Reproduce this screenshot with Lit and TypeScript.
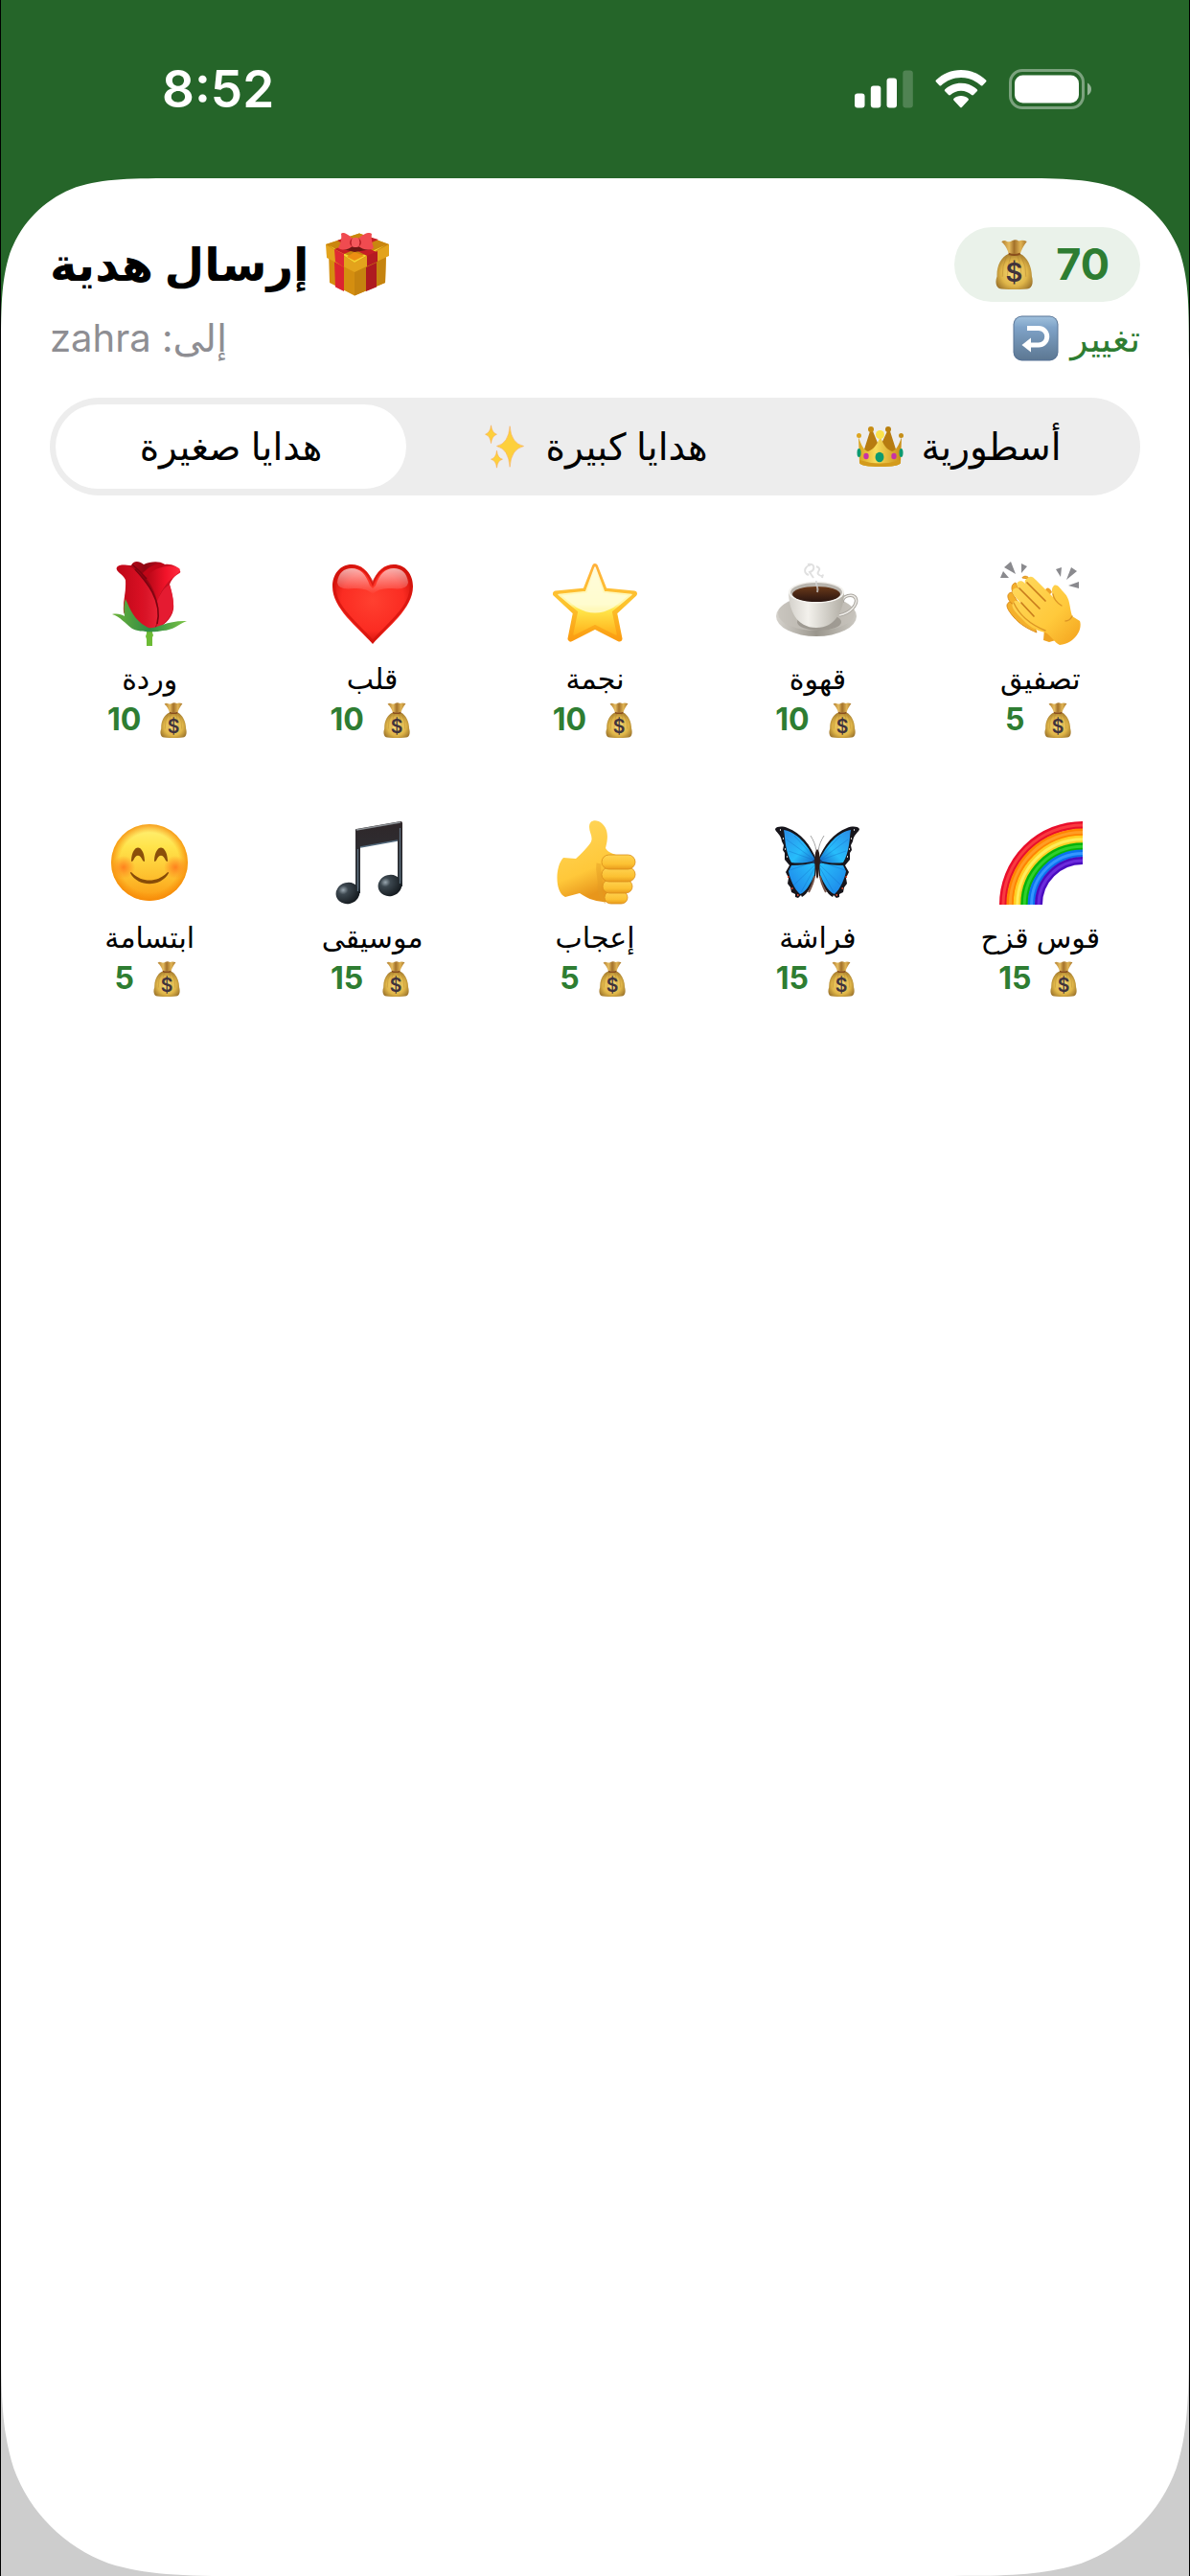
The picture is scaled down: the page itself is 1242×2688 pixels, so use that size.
import { LitElement, html, svg, css, TemplateResult } from "lit";
import { customElement, property, state } from "lit/decorators.js";

/* Every drawing below sits on its own small grid; gift art uses an 88 x 88 box. */
const art: Record<string, TemplateResult> = {
  rose: html`<svg viewBox="0 0 88 88" aria-hidden="true">
    <defs>
      <linearGradient id="r1" x1="0" x2="1"><stop offset="0" stop-color="#d80a1c" /><stop offset=".45" stop-color="#8e0512" /><stop offset="1" stop-color="#e8172a" /></linearGradient>
      <linearGradient id="r2" x1="0" x2="1"><stop offset="0" stop-color="#b30615" /><stop offset=".6" stop-color="#f2142a" /><stop offset="1" stop-color="#ff2c40" /></linearGradient>
      <linearGradient id="r3" x1="0" x2="1"><stop offset="0" stop-color="#6db33a" /><stop offset=".5" stop-color="#2f8a45" /><stop offset="1" stop-color="#7cc544" /></linearGradient>
    </defs>
    <path d="M41 68h6l0 6 1 3-1 2v9h-6v-7l-1-3 1-3z" fill="#6cbb35" />
    <path d="M25 4C27-1 33-1 38 3C45 0 54-1 60 3C67 2 74 5 76 10C78 13 70 12 65 24C67 32 70 42 69 50C67 60 59 68 45 72C32 70 20 63 17 52C16 42 20 32 19 19C16 12 8 10 10 6C13 2 20 4 25 4Z" fill="url(#r1)" />
    <path d="M36 13C42 6 52 0 60 3C56 8 44 12 41 18Z" fill="#c00617" />
    <path d="M40 17C48 6 66 2 75 7C79 11 67 15 60 26C55 33 54 37 52 42C50 32 46 24 40 17Z" fill="url(#r2)" />
    <path d="M65 24C68 33 71 45 67 54C63 62 57 67 50 71C55 60 54 52 52 41C57 30 60 27 65 24Z" fill="#e51b31" />
    <path d="M10 6C14 2 24 4 29 9C34 14 46 28 50 38C55 50 54 62 49 70C36 70 19 62 17 52C17 40 21 31 19 19C17 13 8 11 10 6Z" fill="url(#r2)" opacity=".72" />
    <path d="M29 8C40 20 58 40 52 65" fill="none" stroke="#7c0410" stroke-width="1.6" />
    <path d="M26 3C32 8 36 12 41 18" fill="none" stroke="#7c0410" stroke-width="1.4" />
    <path d="M5 55C10 54 15 55 18 57C17 50 17 45 19 39C24 50 28 61 41 68C48 73 59 61 83 62C75 65 68 72 58 72C51 74 33 74 26 70C19 65 13 57 5 55Z" fill="url(#r3)" />
  </svg>`,
  heart: html`<svg viewBox="0 0 88 88" aria-hidden="true">
    <defs>
      <radialGradient id="h1" cx=".5" cy=".45" r=".55"><stop offset="0" stop-color="#ff4030" /><stop offset=".7" stop-color="#fb2c22" /><stop offset="1" stop-color="#d3130c" /></radialGradient>
      <linearGradient id="h2" x1="0" y1="0" x2="0" y2="1"><stop offset="0" stop-color="#fff" stop-opacity=".65" /><stop offset="1" stop-color="#fff" stop-opacity="0" /></linearGradient>
    </defs>
    <path d="M44 22C39 9 32 3 22 3C10 3 2 13 2 26C2 49 28 68 44 86C60 68 86 49 86 26C86 13 78 3 66 3C56 3 49 9 44 22Z" fill="url(#h1)" />
    <path d="M44 23C39 11 32 5 22 5C11 5 4 14 4 26C4 48 28 65 44 83C60 65 84 48 84 26C84 14 77 5 66 5C56 5 49 11 44 23Z" fill="none" stroke="#d3130c" stroke-width="2.5" opacity=".75" />
    <path d="M7 22C8 12 14 7 22 7C31 7 37 13 41 25L44 28L47 25C51 13 57 7 66 7C74 7 80 12 81 22Q80 30 64 28Q50 27 44 34Q38 27 24 28Q8 30 7 22Z" fill="url(#h2)" />
  </svg>`,
  star: html`<svg viewBox="0 0 88 88" aria-hidden="true">
    <defs>
      <linearGradient id="s1" x1="0" y1="0" x2="0" y2="1"><stop offset="0" stop-color="#ffb13a" /><stop offset=".5" stop-color="#fdc52e" /><stop offset="1" stop-color="#fb9d12" /></linearGradient>
      <linearGradient id="s2" x1="0" y1="0" x2="0" y2="1"><stop offset="0" stop-color="#fffbe0" /><stop offset=".55" stop-color="#fff7a8" /><stop offset=".62" stop-color="#ffe84c" /><stop offset="1" stop-color="#ffb31b" /></linearGradient>
    </defs>
    <path d="M44 5L54 30.500L85 33.500L64 53L69.500 80.500L44 67.500L18.500 80.500L24 53L3 33.500L34 30.500Z" fill="url(#s1)" stroke="url(#s1)" stroke-width="6" stroke-linejoin="round" />
    <path d="M44 6L53.500 31.500L82 34.500L61 52L66 76L44 65L22 76L27 52L6 34.500L34.500 31.500Z" fill="url(#s2)" stroke="url(#s2)" stroke-width="1.500" stroke-linejoin="round" />
    <path d="M44 8L52.500 32.500L79 35.500L63 48Q44 59 25 48L9 35.500L35.500 32.500Z" fill="#fffdd8" opacity=".8" />
  </svg>`,
  coffee: html`<svg viewBox="0 0 88 88" aria-hidden="true">
    <defs>
      <linearGradient id="c1" x1="0" x2="1"><stop offset="0" stop-color="#d6d3cd" /><stop offset=".5" stop-color="#9a968d" /><stop offset="1" stop-color="#ccc9c2" /></linearGradient>
      <linearGradient id="c2" x1="0" x2="1"><stop offset="0" stop-color="#d4d1cb" /><stop offset=".35" stop-color="#f3f1ec" /><stop offset="1" stop-color="#b1ada4" /></linearGradient>
      <linearGradient id="c3" x1="0" y1="0" x2="0" y2="1"><stop offset="0" stop-color="#6b3a1a" /><stop offset="1" stop-color="#2a1510" /></linearGradient>
    </defs>
    <ellipse cx="43" cy="57" rx="42" ry="21" fill="url(#c1)" />
    <ellipse cx="43" cy="54" rx="40" ry="18" fill="#c4c0b9" opacity=".7" />
    <ellipse cx="46" cy="63" rx="23" ry="9" fill="#8b867d" opacity=".6" />
    <path d="M70 43C70 35 81 33 84 38C87 45 78 54 67 56" fill="none" stroke="#a9a59e" stroke-width="3.500" />
    <path d="M70 43C70 35 81 33 84 38C87 45 78 54 67 56" fill="none" stroke="#efede9" stroke-width="1.500" />
    <path d="M14 31C14 50 22 69 43 69C63 69 72 51 72 31Z" fill="url(#c2)" />
    <ellipse cx="43" cy="32" rx="29" ry="11.500" fill="#f4f2ee" />
    <ellipse cx="43" cy="32" rx="27" ry="10" fill="#b9b5ae" />
    <ellipse cx="43" cy="34" rx="25" ry="8" fill="url(#c3)" />
    <path d="M35 14C27 11 33 3 37 4M34 3C42 1 42 9 36 11L40 17M43 5C51 8 41 11 46 14S50 11 49 17M43 20C42 25 46 27 44 32" fill="none" stroke="#d5d5d5" stroke-width="2" opacity=".75" />
  </svg>`,
  clap: html`<svg viewBox="0 0 88 88" aria-hidden="true">
    <defs>
      <linearGradient id="k1" x1="0" y1="0" x2="1" y2="1"><stop offset="0" stop-color="#ffd95e" /><stop offset=".6" stop-color="#ffc93b" /><stop offset="1" stop-color="#f3a11d" /></linearGradient>
    </defs>
    <path d="M2 17L5 10L11 17ZM6 6L13 0L18 13ZM24 2L30 5L24 12ZM60 8L66 6L65 16ZM76 6L82 10L71 19ZM73 25L84 21L84 28Z" fill="#8a8a8e" />
    <path d="M48 70L47 82L53 84L60 82Z" fill="#efa321" />
    <path d="M12 42C5 45 12 53 16 58C22 65 30 70 40 74L34 58ZM18 22C12 24 14 31 16 34L26 40ZM14 32C8 33 9 39 14 44L24 48ZM25 17C25 15 31 14 32 18Z" fill="#f4b02c" stroke="#dd9020" stroke-width="1" />
    <path d="M49 30C50 26 54 27 56 32L52 36Z" fill="#eda127" />
    <path d="M31 17C34 14 37 17 39 19L57 37C56 31 55 28 58 25C62 23 65 29 69 33C75 39 74 47 77 57L85 62C88 70 81 85 64 87C58 84 55 77 49 74C38 72 30 66 24 59C16 51 12 46 16 42C19 39 22 42 24 44L16 35C12 30 18 25 22 29L20 26C17 21 24 18 27 22L28 23C27 20 28 18 31 17Z" fill="url(#k1)" />
    <path d="M30 22L49 41M22 28L43 49M24 43L37 57" fill="none" stroke="#c97c1c" stroke-width="1.700" stroke-linecap="round" />
    <path d="M57 34C58 40 61 43 66 46M77 57C75 61 72 62 70 62M16 43C21 54 32 65 49 72" fill="none" stroke="#dd9625" stroke-width="1.400" stroke-linecap="round" />
  </svg>`,
  smile: html`<svg viewBox="0 0 88 88" aria-hidden="true">
    <defs>
      <linearGradient id="f1" x1="0" y1="0" x2="0" y2="1"><stop offset="0" stop-color="#fff27a" /><stop offset=".3" stop-color="#ffe34a" /><stop offset=".65" stop-color="#fec331" /><stop offset="1" stop-color="#fb9a12" /></linearGradient>
      <radialGradient id="f2"><stop offset=".78" stop-color="#f98a08" stop-opacity="0" /><stop offset="1" stop-color="#f58706" stop-opacity=".8" /></radialGradient>
      <radialGradient id="f3"><stop offset="0" stop-color="#ff6a15" stop-opacity=".75" /><stop offset="1" stop-color="#ff6a15" stop-opacity="0" /></radialGradient>
    </defs>
    <circle cx="44" cy="44" r="40" fill="url(#f1)" />
    <circle cx="44" cy="44" r="40" fill="url(#f2)" />
    <circle cx="17" cy="49" r="12" fill="url(#f3)" />
    <circle cx="71" cy="49" r="12" fill="url(#f3)" />
    <path d="M25 42C26 24 38 24 39 42Q39 44 37 42C34 35 30 35 27 42Q25 44 25 42ZM49 42C50 24 62 24 63 42Q63 44 61 42C58 35 54 35 51 42Q49 44 49 42Z" fill="#8a4f0a" />
    <path d="M24 55Q24 53 26 55C36 65 52 65 62 55Q64 53 64 55C56 70 32 70 24 55Z" fill="#884c08" />
  </svg>`,
  music: html`<svg viewBox="0 0 88 88" aria-hidden="true">
    <defs>
      <linearGradient id="m1" x1="0" y1="0" x2="0" y2="1"><stop offset="0" stop-color="#2f2729" /><stop offset="1" stop-color="#2b353d" /></linearGradient>
      <radialGradient id="m2" cx=".35" cy=".3" r=".7"><stop offset="0" stop-color="#9aa7b0" /><stop offset=".3" stop-color="#3c474f" /><stop offset="1" stop-color="#161c21" /></radialGradient>
    </defs>
    <path d="M26 10Q26 9 27 9L73 1Q75 1 75 3V69H70V21L31 28V76H26Z" fill="url(#m1)" />
    <path d="M27 10L73 2" stroke="#8d9296" stroke-width="1.500" />
    <path d="M31 28L70 21" stroke="#52697c" stroke-width="1.500" />
    <ellipse cx="18" cy="76" rx="12.500" ry="11" transform="rotate(-15 18 76)" fill="url(#m2)" />
    <ellipse cx="62" cy="68" rx="12.500" ry="11" transform="rotate(-15 62 68)" fill="url(#m2)" />
    <path d="M28.500 30V74M72.500 8V66" stroke="#5f7282" stroke-width="1.200" />
  </svg>`,
  thumb: html`<svg viewBox="0 0 88 88" aria-hidden="true">
    <defs>
      <linearGradient id="t1" x1="0" y1="0" x2=".3" y2="1"><stop offset="0" stop-color="#ffd75c" /><stop offset=".7" stop-color="#ffc83a" /><stop offset="1" stop-color="#e8961b" /></linearGradient>
      <linearGradient id="t2" x1="0" y1="0" x2="0" y2="1"><stop offset="0" stop-color="#ffd452" /><stop offset=".65" stop-color="#fcc132" /><stop offset="1" stop-color="#e99b1c" /></linearGradient>
    </defs>
    <path d="M38 7C38-1 46-1 51 3C58 9 58 18 55 29C57 33 61 34 66 36L66 84C55 86 42 86 28 76L13 80C2 76 2 48 11 39L24 40C30 35 35 29 39 24C43 18 38 13 38 7Z" fill="url(#t1)" />
    <path d="M48 45C46 56 51 60 49 70C49 76 52 82 56 85" fill="none" stroke="#e39b24" stroke-width="5" opacity=".45" />
    <rect x="54" y="74" width="24" height="13" rx="6.500" fill="url(#t2)" stroke="#d98d1a" stroke-width=".8" />
    <rect x="52" y="62" width="31" height="14" rx="7" fill="url(#t2)" stroke="#d98d1a" stroke-width=".8" />
    <rect x="51" y="49" width="35" height="15" rx="7.500" fill="url(#t2)" stroke="#d98d1a" stroke-width=".8" />
    <rect x="51" y="36" width="35" height="15" rx="7.500" fill="url(#t2)" stroke="#d98d1a" stroke-width=".8" />
  </svg>`,
  butterfly: html`<svg viewBox="0 0 88 88" aria-hidden="true">
    <defs>
      <linearGradient id="b1" x1="0" y1="0" x2="1" y2="1"><stop offset="0" stop-color="#2b8ee8" /><stop offset=".6" stop-color="#27bdfb" /><stop offset="1" stop-color="#1569c9" /></linearGradient>
      <linearGradient id="b2" x1="1" y1="0" x2="0" y2="1"><stop offset="0" stop-color="#29c3fd" /><stop offset="1" stop-color="#1c7fe6" /></linearGradient>
    </defs>
    ${[1, -1].map((s) => svg`<g transform=${s === 1 ? "" : "translate(88 0) scale(-1 1)"}>
      <path d="M0 9C2 6 8 6 13 8C27 13 37 26 43 41L42 58C38 68 34 77 28 80L27 78L24 81L21 80L21 77L17 75L16 70L13 66L14 60L11 54L15 47L10 41L10 34L8 31L9 26L7 22C6 14 0 12 0 9Z" fill="#17151b" />
      <path d="M9 10C22 12 34 25 42 42C32 45 23 45 17 44C14 39 12 32 11 26C10 20 10 15 9 10Z" fill="url(#b1)" />
      <path d="M17 47C26 47 35 46 42 44L41 57C37 66 32 75 26 77C20 72 15 60 14 53Z" fill="url(#b2)" />
      <path d="M42 42L12 20M42 42L14 32M42 43L15 52M41 47L19 68M41 50L27 75M42 40L20 16" stroke="#126ac5" stroke-width=".7" opacity=".5" />
      <path d="M41 58C40 66 37 71 35 75" stroke="#77554a" stroke-width="2" fill="none" />
      <path d="M5 10h1M8 19h1M10 30h1M12 38h1" stroke="#fff" stroke-width="1.500" />
      <path d="M13 59h1.500M17 71h1.500M23 78h1.500" stroke="#c9442c" stroke-width="2" />
      <path d="M43 32C42 25 40 21 37 16" stroke="#9b9b9b" stroke-width=".9" fill="none" />
    </g>`)}
    <ellipse cx="44" cy="43" rx="5" ry="3" fill="#173a6c" />
    <path d="M44 30C47 33 46 38 47 42L45 59L44 61L43 59L41 42C42 38 41 33 44 30Z" fill="#2d1c1a" />
  </svg>`,
  rainbow: html`<svg viewBox="0 0 88 88" aria-hidden="true">
    ${[
      ["#e90f2c", "#f93a40"],
      ["#ff8400", "#ff9d24"],
      ["#ffcf24", "#ffec5a"],
      ["#07b30a", "#2fd02c"],
      ["#0a72ee", "#3596ff"],
      ["#4a0cc0", "#6c2bdc"],
    ].map(([c, l], i) => {
      const r = 83 - i * 7.4;
      const d = `M${88 - r} 88A${r} ${r} 0 0 1 88 ${88 - r}`;
      return svg`<path d=${d} fill="none" stroke=${c} stroke-width="8" /><path d=${d} fill="none" stroke=${l} stroke-width="3" />`;
    })}
  </svg>`,
};

const moneyBag = html`<svg viewBox="0 0 82 110" aria-hidden="true">
  <defs>
    <radialGradient id="g1" cx=".5" cy=".55" r=".6"><stop offset="0" stop-color="#f9de7c" /><stop offset=".6" stop-color="#dfb548" /><stop offset="1" stop-color="#98702a" /></radialGradient>
    <linearGradient id="g2" x1="0" x2="1"><stop offset="0" stop-color="#b07c2d" /><stop offset=".3" stop-color="#e5bc60" /><stop offset=".5" stop-color="#a3712a" /><stop offset=".75" stop-color="#e0b454" /><stop offset="1" stop-color="#a87529" /></linearGradient>
  </defs>
  <path d="M13 5Q19 0 25 4Q31 6 37 2Q45-1 51 3Q60 0 69 4C63 12 58 20 54 32H29C26 20 21 12 13 5Z" fill="url(#g2)" />
  <path d="M29 31C11 38 2 60 3 81C-1 92 0 104 8 108Q14 110 41 110Q68 110 74 108C82 104 83 92 80 81C80 60 70 38 54 31Z" fill="url(#g1)" />
  <path d="M24 38Q14 58 15 82M34 35Q26 56 26 80M57 38Q68 58 67 82M48 35Q57 56 57 80" fill="none" stroke="#a97c2c" stroke-width="1.500" opacity=".6" />
  <path d="M29 29Q41 34 54 29V34Q41 38 29 34Z" fill="#8a4e1c" />
  <text x="41" y="94" text-anchor="middle" font-family="Inter, sans-serif" font-size="58" font-weight="600" fill="#40333c">$</text>
</svg>`;

const giftBox = html`<svg class="gift-icon" viewBox="0 0 66 66" aria-hidden="true">
  <path d="M3 20L30 34L63 20L62 52L30 65.500L4 52Z" fill="#d48e10" />
  <path d="M30 34L63 20L62 52L30 65.500Z" fill="#c5830f" />
  <path d="M9 30L19 36V61L10 56.500Z" fill="#dc2430" />
  <path d="M42 36L53 31V56.500L42 61Z" fill="#ae1a20" />
  <path d="M0 12L35 0.500L66 12V24L30 41L1 26Z" fill="#e3a31c" />
  <path d="M0 12L35 0.500L66 12L30 31Z" fill="#c9860f" />
  <path d="M3 13L30 27L62 13L30 31Z" fill="#f6d431" />
  <path d="M9 17L19 22L55 7L45 4ZM45 25L53 20L20 5L12 8Z" fill="#c61d25" />
  <path d="M30 20L40 24L30 29L22 25Z" fill="#ec8f12" />
  <path d="M9 17L19 22V36L10 30Z" fill="#e02a33" />
  <path d="M43 24L54 19V30L43 35Z" fill="#b51b22" />
  <path d="M14 16L30 20L48 17L40 12H22Z" fill="#6f1714" />
  <path d="M28 6C22 0 17-1 16 1C17 7 15 12 13 16C19 19 24 17 28 14ZM34 6C40 0 46-1 48 1C47 7 49 12 50 16C44 19 38 17 34 14Z" fill="#f04b50" />
  <path d="M28 6C25 9 25 11 28 14M34 6C37 9 37 11 34 14" stroke="#b72028" stroke-width="1.500" fill="none" />
  <rect x="27" y="5" width="8" height="10" rx="3" fill="#f4595c" />
</svg>`;

const crown = html`<svg class="crown-icon" viewBox="0 0 49 42" aria-hidden="true">
  <defs><linearGradient id="w1" x1="0" x2="1"><stop offset="0" stop-color="#d9a41f" /><stop offset=".4" stop-color="#f8dc5b" /><stop offset="1" stop-color="#c98e16" /></linearGradient></defs>
  <path d="M7 27L14 5L17 5L24 22L32 5L35 5L42 27Z" fill="#b77c11" />
  <path d="M2 11C5 20 8 25 12 26C18 24 22 18 25 10C27 18 31 24 37 26C41 25 44 20 47 11L46 38Q44 42 24.500 42Q5 42 3 38Z" fill="url(#w1)" />
  <path d="M3 35Q24 42 46 35V38Q44 42 24.500 42Q5 42 3 38Z" fill="#d39b1d" />
  <circle cx="2.500" cy="9.500" r="2.500" fill="#dda520" /><circle cx="46.500" cy="9.500" r="2.500" fill="#c58e18" />
  <circle cx="15" cy="3" r="3" fill="#c78d14" /><circle cx="33" cy="3" r="3" fill="#b9800f" />
  <circle cx="24.500" cy="8.500" r="4.500" fill="#fbe34c" />
  <ellipse cx="24" cy="32" rx="4.500" ry="5.200" fill="#0d9a70" /><ellipse cx="10" cy="31" rx="2.700" ry="3.200" fill="#c832a5" /><ellipse cx="39" cy="31" rx="2.700" ry="3.200" fill="#c832a5" />
  <ellipse cx="2.500" cy="27.500" rx="2" ry="4.500" fill="#0d9a70" /><ellipse cx="46.500" cy="27.500" rx="2" ry="4.500" fill="#0d9a70" />
</svg>`;

const sparkles = html`<svg class="spark-icon" viewBox="0 0 48 54" aria-hidden="true">
  <g fill="#fdd03c" stroke="#fba54a" stroke-width=".6">
    <path d="M30 2Q31.500 23 47 26.500Q31.500 30 30 52Q28.500 30 14 26.500Q28.500 23 30 2Z" />
    <path d="M7 1Q8 10 14 12Q8 14 7 23Q6 14 0 12Q6 10 7 1Z" />
    <path d="M14 32Q15 41 21 42.500Q15 44 14 53Q13 44 7 42.500Q13 41 14 32Z" />
  </g>
</svg>`;

const returnKey = html`<svg class="return-icon" viewBox="0 0 48 48" aria-hidden="true">
  <defs><linearGradient id="k2" x1="0" y1="0" x2="0" y2="1"><stop offset="0" stop-color="#9fc0dc" /><stop offset=".25" stop-color="#7fa3c8" /><stop offset="1" stop-color="#5d7893" /></linearGradient></defs>
  <rect x=".5" y=".5" width="47" height="47" rx="9" fill="#587496" />
  <rect x="1.500" y="1.500" width="45" height="44.500" rx="8" fill="url(#k2)" />
  <path d="M15 13.500H27A8.700 8.700 0 0 1 27 31H18" fill="none" stroke="#fff" stroke-width="5" />
  <path d="M9.500 31L19 23.500V38.500Z" fill="#fff" />
</svg>`;

/* Smooth-corner cutout, drawn for the top left and mirrored for the others. */
const corner = (place: string) => html`<svg class="corner ${place}" viewBox="0 0 153 153" aria-hidden="true">
  <path d="M0 0H153C108.800 0 86.800 0 63.100 7.500C37.300 16.900 16.900 37.300 7.500 63.100C0 86.800 0 108.800 0 153Z" />
</svg>`;

interface Gift {
  icon: string;
  name: string;
  price: number;
}

const gifts: Gift[] = [
  { icon: "rose", name: "وردة", price: 10 },
  { icon: "heart", name: "قلب", price: 10 },
  { icon: "star", name: "نجمة", price: 10 },
  { icon: "coffee", name: "قهوة", price: 10 },
  { icon: "clap", name: "تصفيق", price: 5 },
  { icon: "smile", name: "ابتسامة", price: 5 },
  { icon: "music", name: "موسيقى", price: 15 },
  { icon: "thumb", name: "إعجاب", price: 5 },
  { icon: "butterfly", name: "فراشة", price: 15 },
  { icon: "rainbow", name: "قوس قزح", price: 15 },
];

@customElement("status-bar")
export class StatusBar extends LitElement {
  static styles = css`
    :host {
      display: flex;
      align-items: center;
      justify-content: space-between;
      height: 186px;
      padding: 0 101px 0 168px;
      box-sizing: border-box;
      color: #fff;
    }
    .time {
      font-size: 53px;
      font-weight: 600;
      line-height: 64px;
    }
    .icons {
      display: flex;
      align-items: center;
      gap: 23px;
    }
    .signal { width: 61px; height: 40px; }
    .wifi { width: 54px; height: 40px; }
    .battery { width: 87px; height: 42px; }
  `;
  render() {
    return html`
      <span class="time">8:52</span>
      <div class="icons">
        <svg class="signal" viewBox="0 0 61 40" fill="#fff" role="img" aria-label="Signal">
          <rect x="0" y="24.500" width="10.500" height="15" rx="3" />
          <rect x="16.800" y="16.500" width="10.500" height="23" rx="3" />
          <rect x="33.500" y="8.500" width="10.500" height="31" rx="3" />
          <rect x="50.300" y=".5" width="10.500" height="39" rx="3" opacity=".2" />
        </svg>
        <svg class="wifi" viewBox="0 0 54 40" fill="#fff" role="img" aria-label="Wi-Fi">
          <path d="M27 0C37 0 46 4 53 10.500Q54 11.500 53 12.500L49.500 16.200Q48.500 17 47.500 16C42 11 35 8 27 8S12 11 6.500 16Q5.500 17 4.500 16.200L1 12.500Q0 11.500 1 10.500C8 4 17 0 27 0Z" />
          <path d="M27 13.700C33.500 13.700 39.300 16.200 43.700 20.200Q44.700 21.200 43.700 22.200L40 26Q39 26.900 38 26C35 23.300 31.300 21.700 27 21.700S19 23.300 16 26Q15 26.900 14 26L10.300 22.200Q9.300 21.200 10.300 20.200C14.700 16.200 20.500 13.700 27 13.700Z" />
          <path d="M27 27C30 27 32.500 28 34.500 29.800Q35.500 30.800 34.500 31.800L28 38.800Q27 39.800 26 38.800L19.500 31.800Q18.500 30.800 19.500 29.800C21.500 28 24 27 27 27Z" />
        </svg>
        <svg class="battery" viewBox="0 0 87 42" fill="#fff" role="img" aria-label="Battery">
          <rect x="1.500" y="1.500" width="76" height="39" rx="12.500" fill="none" stroke="#fff" stroke-width="3" opacity=".4" />
          <rect x="6" y="6.500" width="67" height="29" rx="8.500" />
          <path d="M82 14.500Q86 17 86 21T82 27.500Z" opacity=".5" />
        </svg>
      </div>
    `;
  }
}

@customElement("coin-amount")
export class CoinAmount extends LitElement {
  @property({ type: Number }) value = 0;
  @property({ type: Boolean, reflect: true }) large = false;
  static styles = css`
    :host {
      display: inline-flex;
      align-items: center;
      gap: 15px;
      color: #2e7d32;
      font-size: 32px;
      font-weight: 700;
      line-height: 38px;
    }
    .bag {
      display: flex;
      justify-content: center;
      width: 38px;
    }
    svg { width: 28px; height: 37px; }
    :host([large]) {
      flex-direction: row-reverse;
      gap: 18px;
      font-size: 45px;
      line-height: 54px;
    }
    :host([large]) .bag { width: 52px; }
    :host([large]) svg { width: 39px; height: 52px; }
  `;
  render() {
    return html`<span>${this.value}</span><span class="bag">${moneyBag}</span>`;
  }
}

@customElement("gift-card")
export class GiftCard extends LitElement {
  @property({ attribute: false }) gift!: Gift;
  static styles = css`
    .card {
      display: flex;
      flex-direction: column;
      align-items: center;
      width: 100%;
      padding: 32px 0;
      border: 0;
      background: none;
      color: #000;
      font: inherit;
    }
    .art { width: 88px; height: 88px; }
    .art svg { display: block; width: 100%; height: 100%; }
    .name {
      margin: 14px 0 4px;
      font-size: 30px;
      font-weight: 500;
      line-height: 40px;
    }
  `;
  render() {
    const { icon, name, price } = this.gift;
    return html`<button class="card" type="button">
      <span class="art">${art[icon]}</span>
      <span class="name" dir="rtl">${name}</span>
      <coin-amount .value=${price}></coin-amount>
    </button>`;
  }
}

@customElement("app-root")
export class AppRoot extends LitElement {
  @state() private tab = 0;

  static styles = css`
    :host {
      display: flex;
      flex-direction: column;
      min-height: 100vh;
      box-sizing: border-box;
      border: solid #000;
      border-width: 0 1px;
      background: linear-gradient(#256529 50%, #cdcdcd 50%);
      font-family: Inter, "Noto Sans", "DejaVu Sans", sans-serif;
    }
    .sheet {
      position: relative;
      flex: 1;
      padding: 51px 51px 120px;
      background: #fff;
    }
    .corner { position: absolute; }
    .tl, .tr { top: 0; width: 190px; height: 190px; fill: #256529; }
    .bl, .br { bottom: 0; width: 272px; height: 272px; fill: #cdcdcd; }
    .tl, .bl { left: 0; }
    .tr, .br { right: 0; }
    .tr { transform: scaleX(-1); }
    .bl { transform: scaleY(-1); }
    .br { transform: scale(-1, -1); }
    .header {
      position: relative;
      display: grid;
      grid-template-columns: 1fr auto;
      grid-template-rows: 78px 48px;
      row-gap: 14px;
      align-items: center;
    }
    .title {
      display: flex;
      align-items: center;
      justify-content: flex-end;
      gap: 18px;
      margin: 0;
      font-size: 48px;
      font-weight: 700;
      line-height: 72px;
    }
    .gift-icon { width: 66px; height: 66px; }
    .balance {
      display: flex;
      align-items: center;
      height: 78px;
      padding: 0 32px 0 36px;
      border-radius: 39px;
      background: #eaf2ea;
    }
    .recipient {
      margin: 0;
      color: #8e8e93;
      font-size: 40px;
      line-height: 48px;
      text-align: end;
    }
    .change {
      display: flex;
      align-items: center;
      justify-content: flex-start;
      gap: 12px;
      padding: 0;
      border: 0;
      background: none;
      color: #2e7d32;
      font: inherit;
      font-size: 38px;
      font-weight: 500;
      line-height: 48px;
    }
    .return-icon { width: 48px; height: 48px; }
    .tabs {
      display: grid;
      grid-template-columns: repeat(3, 1fr);
      gap: 14px;
      margin-top: 38px;
      padding: 7px 6px;
      border-radius: 51px;
      background: #ededed;
    }
    .tab {
      display: flex;
      align-items: center;
      justify-content: center;
      gap: 18px;
      height: 88px;
      padding: 0;
      border: 0;
      border-radius: 44px;
      background: none;
      color: #000;
      font: inherit;
      font-size: 39px;
      font-weight: 500;
      line-height: 48px;
    }
    .tab[aria-selected="true"] { background: #fff; }
    .crown-icon { width: 49px; height: 42px; }
    .spark-icon { width: 48px; height: 46px; }
    .gifts {
      display: grid;
      grid-template-columns: repeat(5, minmax(0, 1fr));
      gap: 22px 24px;
      margin: 37px 0 0;
      padding: 0;
      list-style: none;
    }
  `;

  private renderTab(index: number, label: string, icon: unknown = "") {
    return html`<button
      class="tab"
      role="tab"
      type="button"
      dir="rtl"
      aria-selected=${this.tab === index ? "true" : "false"}
      @click=${() => (this.tab = index)}
    ><span>${label}</span>${icon}</button>`;
  }

  render() {
    return html`
      <status-bar></status-bar>
      <main class="sheet">
        ${corner("tl")}${corner("tr")}${corner("bl")}${corner("br")}
        <header class="header">
          <h1 class="title" dir="rtl">${giftBox}<span>إرسال هدية</span></h1>
          <div class="balance"><coin-amount large .value=${70}></coin-amount></div>
          <p class="recipient" dir="rtl">إلى: zahra</p>
          <button class="change" type="button" dir="rtl"><span>تغيير</span>${returnKey}</button>
        </header>
        <div class="tabs" role="tablist">
          ${this.renderTab(0, "هدايا صغيرة")}
          ${this.renderTab(1, "هدايا كبيرة", sparkles)}
          ${this.renderTab(2, "أسطورية", crown)}
        </div>
        <ul class="gifts">
          ${gifts.map((gift) => html`<li><gift-card .gift=${gift}></gift-card></li>`)}
        </ul>
      </main>
    `;
  }
}
